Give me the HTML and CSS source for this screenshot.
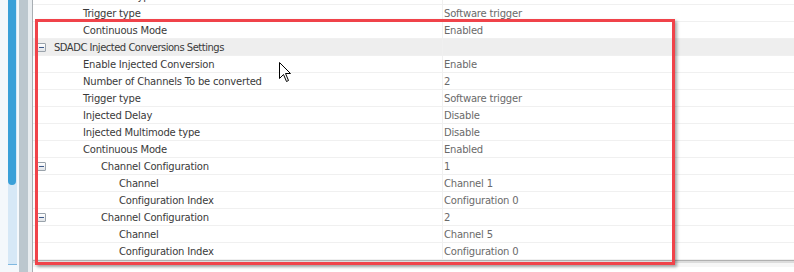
FILE: index.html
```html
<!DOCTYPE html>
<html>
<head>
<meta charset="utf-8">
<link rel="stylesheet" href="styles.css">
</head>
<body>
<div class="window">
  <div class="side">
    <div class="track"><div class="thumb"></div></div>
  </div>
  <div class="splitter"></div>
  <div class="gap"></div>
  <div class="panel">
    <div class="grid">
      <div class="row"><div class="name l1">Advanced type</div><div class="val">Disable</div></div>
      <div class="row"><div class="name l1">Trigger type</div><div class="val">Software trigger</div></div>
      <div class="row"><div class="name l1">Continuous Mode</div><div class="val">Enabled</div></div>
      <div class="row head"><div class="name l0"><span class="tog"></span><span class="htext">SDADC Injected Conversions Settings</span></div><div class="val"></div></div>
      <div class="row"><div class="name l1">Enable Injected Conversion</div><div class="val">Enable</div></div>
      <div class="row"><div class="name l1">Number of Channels To be converted</div><div class="val">2</div></div>
      <div class="row"><div class="name l1">Trigger type</div><div class="val">Software trigger</div></div>
      <div class="row"><div class="name l1">Injected Delay</div><div class="val">Disable</div></div>
      <div class="row"><div class="name l1">Injected Multimode type</div><div class="val">Disable</div></div>
      <div class="row"><div class="name l1">Continuous Mode</div><div class="val">Enabled</div></div>
      <div class="row"><div class="name l2"><span class="tog"></span><span>Channel Configuration</span></div><div class="val">1</div></div>
      <div class="row"><div class="name l3">Channel</div><div class="val">Channel 1</div></div>
      <div class="row"><div class="name l3">Configuration Index</div><div class="val">Configuration 0</div></div>
      <div class="row"><div class="name l2"><span class="tog"></span><span>Channel Configuration</span></div><div class="val">2</div></div>
      <div class="row"><div class="name l3">Channel</div><div class="val">Channel 5</div></div>
      <div class="row"><div class="name l3">Configuration Index</div><div class="val">Configuration 0</div></div>
    </div>
    <div class="hbar"></div>
  </div>
  <div class="highlight"></div>
  <svg class="cursor" width="13" height="20" viewBox="0 0 13 20">
    <path d="M0.5 0.5 L0.5 16.5 L4.5 12.5 L7.5 19.5 L9.5 18.5 L6.5 11.5 L11.5 11.5 Z" fill="#fff" stroke="#000" stroke-width="1" stroke-linejoin="miter"/>
  </svg>
</div>
</body>
</html>
```
FILE: styles.css
```css
html, body {
  margin: 0;
  padding: 0;
  background: #ffffff;
}
.window {
  position: relative;
  width: 794px;
  height: 272px;
  overflow: hidden;
  display: flex;
  font-family: "DejaVu Sans", Verdana, sans-serif;
  font-size: 10px;
}
.side {
  width: 19px;
  flex: none;
  background: #f4f8fb;
  display: flex;
  padding-left: 8px;
  box-sizing: border-box;
}
.track {
  width: 9px;
  height: 265px;
  background: #d6e8f6;
  border-bottom: 1px solid #7fb8e0;
  box-sizing: border-box;
}
.thumb {
  width: 8px;
  height: 185px;
  background: #3aa0d8;
  border-radius: 0 0 4px 4px;
}
.splitter {
  width: 9px;
  flex: none;
  background: #bcc7ce;
}
.gap {
  width: 4px;
  flex: none;
  background: #e9edf0;
}
.panel {
  flex: 1;
  display: flex;
  flex-direction: column;
  border-left: 1px solid #a8aeb3;
  min-width: 0;
}
.grid {
  margin-top: -12px;
  display: flex;
  flex-direction: column;
  border-bottom: 1px solid #b0b0b0;
  box-sizing: border-box;
  flex: none;
  height: 273px;
}
.row {
  height: 17px;
  flex: none;
  display: flex;
  border-bottom: 1px solid #f0f0f0;
  box-sizing: border-box;
  line-height: 18px;
  color: #3a3a3a;
}
.row.head {
  background: #eeeeee;
}
.name {
  width: 410px;
  flex: none;
  box-sizing: border-box;
  display: flex;
  align-items: flex-start;
  border-right: 1px solid #f0f0f0;
  white-space: nowrap;
  letter-spacing: -0.2px;
}
.val {
  flex: 1;
  padding-left: 1px;
  color: #6a6a6a;
  white-space: nowrap;
  letter-spacing: -0.2px;
}
.htext {
  letter-spacing: -0.5px;
}
.l0 { padding-left: 4px; }
.l1 { padding-left: 50px; }
.l2 { padding-left: 4px; }
.l3 { padding-left: 86px; }
.tog {
  width: 7px;
  height: 7px;
  margin-top: 4px;
  border: 1px solid #9aa3ab;
  border-radius: 1px;
  background: linear-gradient(#ffffff, #dfe3e7);
  position: relative;
  flex: none;
}
.tog::after {
  content: "";
  position: absolute;
  left: 1px;
  right: 1px;
  top: 3px;
  height: 1px;
  background: #3d5a8a;
}
.l0 .tog { margin-right: 8px; }
.l2 .tog { margin-right: 55px; }
.hbar {
  height: 2px;
  background: #dcdcdc;
  border-bottom: 4px solid #f6f6f6;
  flex: none;
}
.highlight {
  position: absolute;
  left: 35px;
  top: 19px;
  width: 640px;
  height: 246px;
  border: 3px solid #f0434a;
  box-sizing: border-box;
  box-shadow: 2px 2px 3px rgba(0, 0, 0, 0.35);
}
.cursor {
  position: absolute;
  left: 279px;
  top: 62px;
}
```
